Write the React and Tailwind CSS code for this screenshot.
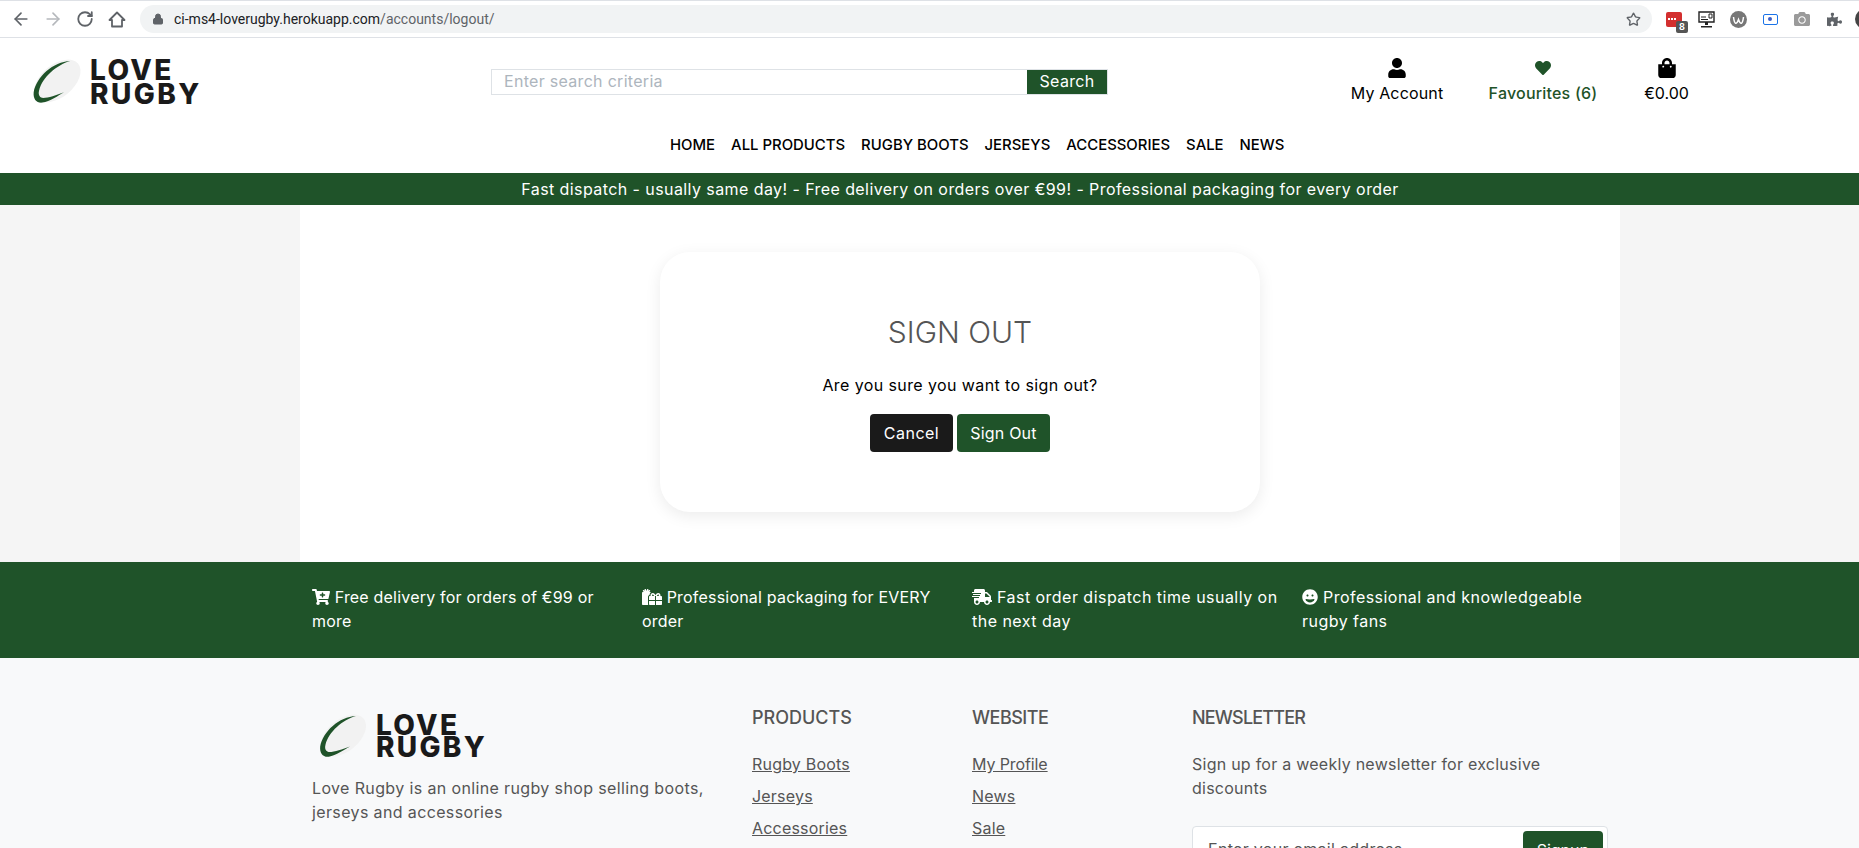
import { ArrowLeft, ArrowRight, RotateCw, Lock, Star } from "lucide-react";
import { FaUser, FaHeart, FaShoppingBag, FaCartPlus, FaGifts, FaShippingFast, FaGrin, FaPuzzlePiece, FaCamera } from "react-icons/fa";

function Logo({ small }) {
  return (
    <div className="flex items-center gap-[8px]">
      <svg viewBox="0 0 145 130" className={small ? "w-[49px] h-[43px] overflow-visible" : "w-[49px] h-[44px] overflow-visible"}>
        <ellipse cx="72" cy="62" rx="80" ry="48" transform="rotate(-40 72 62)" fill="#f2f2f2" />
        <path d="M110 3C60 5 10 50 2 95C0 115 10 128 28 126C50 122 75 105 92 95C70 103 45 112 30 112C22 112 14 105 18 90C28 50 70 15 110 3Z" fill="#1f5329" />
      </svg>
      <div className={small ? "font-extrabold text-[#1a1a1a] text-[28px] leading-[22px] tracking-[2.3px]" : "font-extrabold text-[#1a1a1a] text-[28px] leading-[24px] tracking-[2.4px]"}>
        <div>LOVE</div>
        <div>RUGBY</div>
      </div>
    </div>
  );
}

function ChromeBar() {
  return (
    <div className="h-[38px] bg-white border-t border-b border-[#dee1e6] flex items-center pl-[5px] text-[#5f6368]">
      <div className="w-[32px] shrink-0 flex justify-center"><ArrowLeft size={20} strokeWidth={2} /></div>
      <div className="w-[32px] shrink-0 flex justify-center"><ArrowRight size={20} strokeWidth={2} className="text-[#b5b8bc]" /></div>
      <div className="w-[32px] shrink-0 flex justify-center"><RotateCw size={18} strokeWidth={2.4} /></div>
      <div className="w-[32px] shrink-0 flex justify-center">
        <svg viewBox="0 0 20 20" className="w-[20px] h-[20px]"><path d="M2.500 11L10 3.500L17.500 11H15V17.500H5V11Z" fill="none" stroke="#5f6368" strokeWidth="1.8" strokeLinejoin="round" /></svg>
      </div>
      <div className="ml-[7px] h-[28px] w-[1512px] shrink-0 rounded-full bg-[#f1f3f4] flex items-center pl-[12px] pr-[11px] text-[14px] font-['Roboto',sans-serif]">
        <Lock size={12} fill="#5f6368" className="mr-[10px]" />
        <span className="text-[#202124]">ci-ms4-loverugby.herokuapp.com</span>
        <span className="text-[#5f6368]">/accounts/logout/</span>
        <Star size={15} strokeWidth={2.2} className="ml-auto" />
      </div>
      <div className="flex items-center ml-[6px] shrink-0">
        <div className="w-[32px] flex justify-center">
          <div className="relative w-[16px] h-[15px] bg-[#d32f2f] rounded-[2px] flex items-center pl-[2px] gap-[1px]">
            <div className="w-[2px] h-[2px] bg-white" />
            <div className="w-[2px] h-[2px] bg-white" />
            <div className="w-[2px] h-[2px] bg-white" />
            <div className="absolute -right-[6px] -bottom-[6px] w-[12px] h-[12px] bg-[#555] rounded-[2px] text-white text-[9px] leading-[12px] text-center font-bold">8</div>
          </div>
        </div>
        <div className="w-[32px] flex justify-center">
          <svg viewBox="0 0 17 17" className="w-[17px] h-[17px]"><path d="M1 1h15v10H1z" stroke="#222" strokeWidth="1.4" fill="none" /><path d="M7 11h3v3H7zM3 15h11v1.500H3z" fill="#222" /><path d="M3 6h5M3 8.500h7M11 3h3v4h-3z" stroke="#222" fill="none" /></svg>
        </div>
        <div className="w-[32px] flex justify-center">
          <svg viewBox="0 0 17 17" className="w-[17px] h-[17px]"><circle cx="8.500" cy="8.500" r="8.500" fill="#777" /><path d="M3.500 6c1 8 3 8 5 2.500c2 5.500 4 5.500 5-2.500" stroke="#fff" strokeWidth="1.500" fill="none" /></svg>
        </div>
        <div className="w-[32px] flex justify-center">
          <div className="w-[15px] h-[11px] border-[1.5px] border-[#1a73e8] rounded-[2px] flex items-center justify-center"><div className="w-[4px] h-[4px] rounded-full bg-[#3c5fc8]" /></div>
        </div>
        <div className="w-[32px] flex justify-center"><FaCamera size={16} className="text-[#9a9a9a]" /></div>
        <div className="w-[32px] flex justify-center"><FaPuzzlePiece size={15} className="text-[#5f6368]" /></div>
        <div className="ml-[5px] w-[20px] h-[20px] rounded-full bg-[#444] shrink-0" />
      </div>
    </div>
  );
}

function Header() {
  return (
    <div className="bg-white">
      <div className="flex h-[92px]">
        <div className="w-[491px] pl-[33px] pt-[20px]"><Logo /></div>
        <div className="w-[617px] pt-[31px]">
          <div className="flex h-[26px] border border-[#dee2e6]">
            <div className="flex-1 pl-[12px] text-[#adb5bd] text-[16px] leading-[22px] tracking-[0.3px]">Enter search criteria</div>
            <div className="w-[80px] bg-[#1f5329] text-white text-[16px] leading-[23px] text-center tracking-[0.3px]">Search</div>
          </div>
        </div>
        <div className="flex pl-[242px] pt-[20px] text-[16px] leading-[24px] text-black">
          <div className="flex flex-col items-center w-[94px]">
            <FaUser size={20} />
            <span className="mt-[3px] tracking-[0.15px] whitespace-nowrap">My Account</span>
          </div>
          <div className="flex flex-col items-center w-[110px] ml-[44px] text-[#1f5329]">
            <FaHeart size={16} className="my-[2px]" />
            <span className="mt-[3px] font-medium tracking-[0.2px] whitespace-nowrap">Favourites (6)</span>
          </div>
          <div className="flex flex-col items-center w-[45px] ml-[46px]">
            <FaShoppingBag size={20} />
            <span className="mt-[3px]">€0.00</span>
          </div>
        </div>
      </div>
      <div className="h-[43px] pl-[670px] flex gap-[16px] text-[14.9px] leading-[24px] font-medium text-black pt-[3px]">
        <span>HOME</span><span>ALL PRODUCTS</span><span>RUGBY BOOTS</span><span>JERSEYS</span><span>ACCESSORIES</span><span>SALE</span><span>NEWS</span>
      </div>
    </div>
  );
}

function Perk({ icon, text, wide }) {
  return (
    <div className={wide ? "w-[330px] px-[12px] pt-[23px] leading-[24px] text-white text-[16px] tracking-[0.47px]" : "w-[330px] px-[12px] pt-[23px] leading-[24px] text-white text-[16px] tracking-[0.2px]"}>
      {icon} {text}
    </div>
  );
}

function FooterLink({ children }) {
  return <div className="underline mb-[8px] tracking-[0.2px]">{children}</div>;
}

export default function App() {
  return (
    <div className="w-[1859px] h-[848px] overflow-hidden font-['Inter',sans-serif] bg-[#f5f5f5]">
      <ChromeBar />
      <Header />
      <div className="h-[32px] bg-[#1f5329] text-white text-center text-[16px] leading-[32px] w-[1920px] tracking-[0.42px]">
        Fast dispatch - usually same day! - Free delivery on orders over €99! - Professional packaging for every order
      </div>
      <div className="w-[1320px] ml-[300px] h-[357px] bg-white pt-[47px]">
        <div className="w-[600px] h-[260px] ml-[360px] rounded-[30px] bg-white shadow-[0_4px_16px_rgba(0,0,0,0.08)] flex flex-col items-center pt-[61px]">
          <h1 className="text-[30px] leading-[38px] font-light text-[#555]">SIGN OUT</h1>
          <p className="mt-[22px] text-[16px] leading-[24px] text-black tracking-[0.4px]">Are you sure you want to sign out?</p>
          <div className="flex gap-[4px] mt-[17px] text-[16px] text-white">
            <div className="w-[83px] h-[38px] bg-[#1a1a1a] rounded-[4px] leading-[38px] text-center tracking-[0.5px]">Cancel</div>
            <div className="w-[93px] h-[38px] bg-[#1f5329] rounded-[4px] leading-[38px] text-center tracking-[0.2px]">Sign Out</div>
          </div>
        </div>
      </div>
      <div className="h-[96px] bg-[#1f5329]">
        <div className="w-[1320px] ml-[300px] flex">
          <Perk icon={<FaCartPlus className="inline w-[18px] h-[16px] align-[-2px]" />} text="Free delivery for orders of €99 or more" />
          <Perk icon={<FaGifts className="inline w-[20px] h-[16px] align-[-2px]" />} text="Professional packaging for EVERY order" />
          <Perk wide icon={<FaShippingFast className="inline w-[20px] h-[16px] align-[-2px]" />} text="Fast order dispatch time usually on the next day" />
          <Perk wide icon={<FaGrin className="inline w-[16px] h-[16px] align-[-2px]" />} text="Professional and knowledgeable rugby fans" />
        </div>
      </div>
      <div className="h-[190px] bg-[#f8f9fa] text-[#555] text-[16px] leading-[24px]">
        <div className="w-[1320px] ml-[300px] flex pt-[48px]">
          <div className="w-[440px] px-[12px]">
            <div className="pl-[7px] h-[55px] pt-[8px]"><Logo small /></div>
            <p className="mt-[15px] tracking-[0.37px]">Love Rugby is an online rugby shop selling boots, jerseys and accessories</p>
          </div>
          <div className="w-[220px] px-[12px]">
            <h5 className="text-[18px] leading-[24px] font-medium mb-[22px]">PRODUCTS</h5>
            <FooterLink>Rugby Boots</FooterLink><FooterLink>Jerseys</FooterLink><FooterLink>Accessories</FooterLink>
          </div>
          <div className="w-[220px] px-[12px]">
            <h5 className="text-[18px] leading-[24px] font-medium mb-[22px] tracking-[-0.5px]">WEBSITE</h5>
            <div className="underline mb-[8px] tracking-[-0.1px]">My Profile</div>
            <FooterLink>News</FooterLink><FooterLink>Sale</FooterLink>
          </div>
          <div className="w-[440px] px-[12px]">
            <h5 className="text-[18px] leading-[24px] font-medium mb-[22px] tracking-[-0.8px]">NEWSLETTER</h5>
            <p className="tracking-[0.25px]">Sign up for a weekly newsletter for exclusive<br />discounts</p>
            <div className="mt-[26px] h-[50px] border border-[#dee2e6] rounded-[4px] bg-white flex items-start p-[4px]">
              <span className="pl-[11px] pt-[6px] flex-1 tracking-[0.3px]">Enter your email address</span>
              <span className="w-[80px] h-[38px] bg-[#1f5329] text-white rounded-[4px] text-center leading-[38px]">Signup</span>
            </div>
          </div>
        </div>
      </div>
    </div>
  );
}
